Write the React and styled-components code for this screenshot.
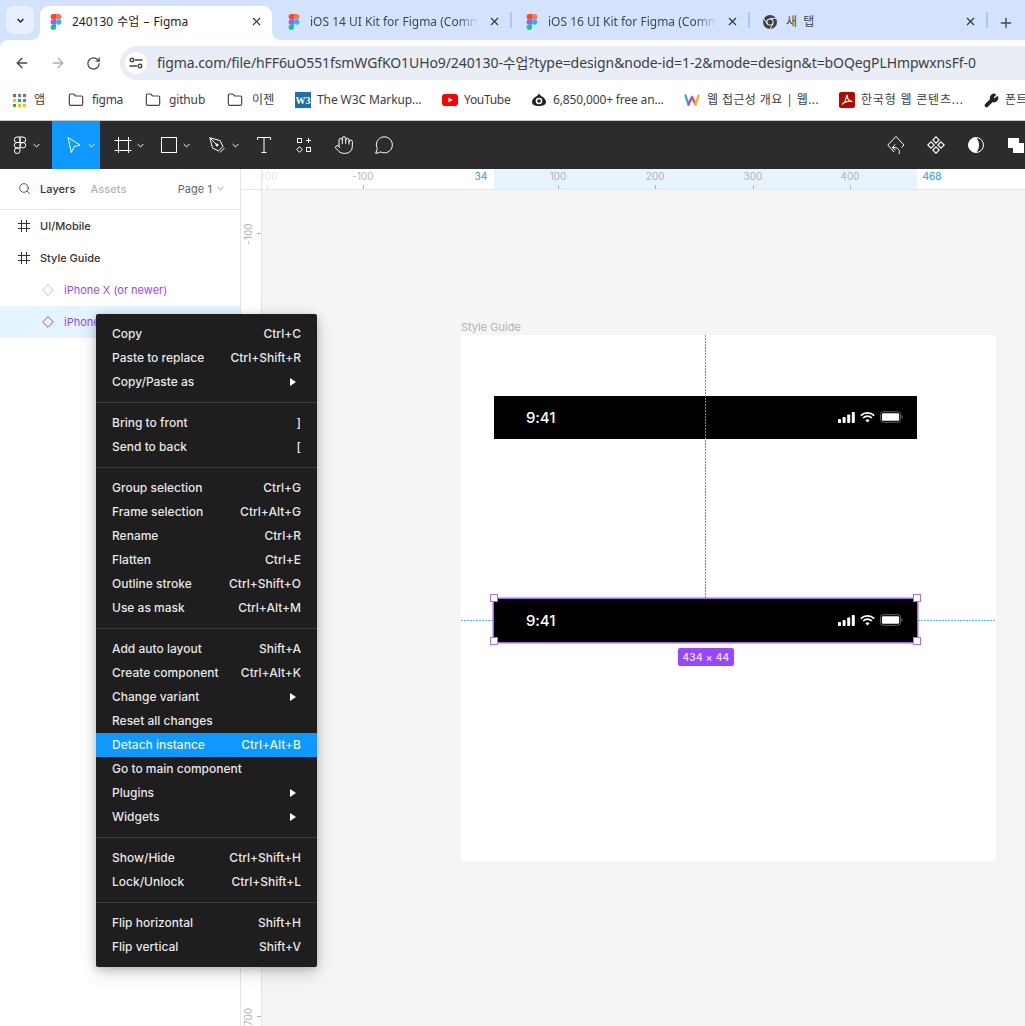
import React from 'react';
import styled, { createGlobalStyle } from 'styled-components';
import { ArrowLeft, ArrowRight, RotateCw, Plus, X, Folder, Wrench, Hand, Search } from 'lucide-react';

const GlobalStyle = createGlobalStyle`
  html, body { margin: 0; padding: 0; background: #f5f5f5; }
  * { box-sizing: border-box; }
  body { font-family: "Inter", "Noto Sans CJK KR", sans-serif; }
`;

const CHROME_FONT = '"Noto Sans", "Noto Sans CJK KR", sans-serif';

const Page = styled.div`
  position: relative;
  width: 1025px;
  height: 1026px;
  overflow: hidden;
  display: flex;
  flex-direction: column;
`;

/* browser chrome */
const BrowserHead = styled.div`
  background: #d3e3fd;
  flex-shrink: 0;
  font-family: ${CHROME_FONT};
`;

const TabStrip = styled.div`
  height: 40px;
  display: flex;
  align-items: flex-end;
`;

const TabSearch = styled.div`
  width: 28px;
  height: 28px;
  margin: 0 2px 6px 6px;
  border-radius: 8px;
  background: #e8f0fe;
  display: flex;
  align-items: center;
  justify-content: center;
  flex-shrink: 0;
`;

const Tab = styled.div`
  position: relative;
  width: 238px;
  height: 34px;
  flex-shrink: 0;
  display: flex;
  align-items: center;
  gap: 8px;
  padding: 0 10px 3px 12px;
  z-index: ${p => (p.$active ? 1 : 0)};

  &::before {
    content: '';
    position: absolute;
    top: 0;
    bottom: 0;
    left: 4px;
    right: 2px;
    border-radius: 9px 9px 0 0;
    background: ${p => (p.$active ? '#fff' : 'transparent')};
  }

  &::after {
    content: '';
    display: ${p => (p.$sep ? 'block' : 'none')};
    position: absolute;
    right: 0;
    top: 6px;
    width: 2px;
    height: 16px;
    background: #a8c7fa;
  }

  > * { position: relative; flex-shrink: 0; }
`;

const Curve = styled.span`
  position: absolute !important;
  bottom: 0;
  ${p => (p.$side === 'left' ? 'left: -4px;' : 'right: -6px;')}
  width: 8px;
  height: 8px;
  background: radial-gradient(circle at ${p => (p.$side === 'left' ? '0 0' : '100% 0')}, transparent 7.5px, #fff 8px);
`;

const TabTitle = styled.span`
  flex: 1 1 0;
  min-width: 0;
  font-size: 12px;
  line-height: 16px;
  word-spacing: ${p => p.$ws || 0}px;
  color: ${p => (p.$active ? '#1f1f1f' : '#444746')};
  white-space: nowrap;
  overflow: hidden;
  mask-image: ${p => (p.$fade ? 'linear-gradient(to right, #000 88%, transparent 100%)' : 'none')};
`;

const CloseBox = styled.span`
  width: 16px;
  height: 16px;
  display: flex;
  align-items: center;
  justify-content: center;
  color: #333;
`;

const NewTab = styled.div`
  margin: 0 0 9px 10px;
  color: #444746;
  display: flex;
`;

const Toolbar = styled.div`
  height: 40px;
  background: #fff;
  border-top-left-radius: 8px;
  display: flex;
  align-items: flex-end;
  padding-left: 14px;
`;

const NavGroup = styled.div`
  height: 34px;
  display: flex;
  align-items: center;
  gap: 20px;
  width: 106px;
  flex-shrink: 0;
`;

const NavIcon = styled.span`
  display: flex;
  color: ${p => (p.$dim ? '#b0b0b0' : '#444746')};
`;

const AddressBar = styled.div`
  flex: 1;
  height: 34px;
  background: #e9eef6;
  border-radius: 17px 0 0 17px;
  display: flex;
  align-items: center;
  padding-left: 5px;
  gap: 10px;
  overflow: hidden;
`;

const SiteBadge = styled.span`
  width: 22px;
  height: 22px;
  border-radius: 50%;
  background: #fff;
  display: flex;
  align-items: center;
  justify-content: center;
  flex-shrink: 0;
`;

const UrlText = styled.span`
  font-size: 14px;
  line-height: 20px;
  color: #3c4043;
  white-space: nowrap;
  letter-spacing: -0.09px;
`;

const Bookmarks = styled.div`
  height: 41px;
  background: #fff;
  border-bottom: 1px solid #c8c8c8;
  display: flex;
  align-items: center;
  padding-left: 13px;
  gap: 21px;
  white-space: nowrap;
  overflow: hidden;
`;

const Bookmark = styled.div`
  display: flex;
  align-items: center;
  gap: ${p => p.$gap || 6}px;
  flex-shrink: 0;
  width: ${p => p.$w}px;

  svg { flex-shrink: 0; }
`;

const BookmarkLabel = styled.span`
  font-size: 12px;
  line-height: 16px;
  letter-spacing: ${p => p.$ls}px;
  color: #3c4043;
`;

/* figma toolbar */
const FigmaBar = styled.div`
  height: 48px;
  background: #2c2c2c;
  display: flex;
  flex-shrink: 0;
  overflow: hidden;
`;

const ToolButton = styled.div`
  width: ${p => p.$w}px;
  flex-shrink: 0;
  display: flex;
  align-items: center;
  justify-content: ${p => (p.$chev ? 'flex-start' : 'center')};
  padding-left: ${p => p.$pad || 0}px;
  gap: ${p => p.$gap || 0}px;
  background: ${p => (p.$active ? '#0d99ff' : 'transparent')};
  color: #fff;
`;

const ToolSpacer = styled.div`
  flex: 1;
`;

const Workspace = styled.div`
  flex: 1;
  display: flex;
  min-height: 0;
`;

/* left panel */
const LeftPanel = styled.aside`
  width: 241px;
  flex-shrink: 0;
  background: #fff;
  border-right: 1px solid #e6e6e6;
`;

const PanelHead = styled.div`
  height: 41px;
  border-bottom: 1px solid #e6e6e6;
  display: flex;
  align-items: center;
  padding: 0 16px 1px 18px;
  font-size: 11px;
  letter-spacing: 0.06px;
`;

const PanelTab = styled.span`
  font-weight: 500;
  color: ${p => (p.$on ? '#333' : '#b3b3b3')};
  margin-left: ${p => p.$ml}px;
`;

const PageName = styled.span`
  margin-left: auto;
  display: flex;
  align-items: center;
  gap: 5px;
  color: #666;
  font-weight: 400;
`;

const LayerRow = styled.div`
  height: 32px;
  display: flex;
  align-items: center;
  padding-left: ${p => (p.$child ? 42 : 18)}px;
  gap: 10px;
  font-size: 11px;
  font-weight: ${p => (p.$child ? 400 : 500)};
  color: ${p => (p.$child ? '#9747ff' : '#333')};
  background: ${p => (p.$selected ? '#e5f4ff' : 'transparent')};
  white-space: nowrap;
`;

/* rulers + canvas */
const Stage = styled.div`
  flex: 1;
  display: grid;
  grid-template-columns: 21px 1fr;
  grid-template-rows: 21px 1fr;
  min-width: 0;
`;

const RulerCorner = styled.div`
  background: #fff;
  border-right: 1px solid #e6e6e6;
  border-bottom: 1px solid #e6e6e6;
`;

const HRuler = styled.div`
  position: relative;
  background: #fff;
  border-bottom: 1px solid #e6e6e6;
  overflow: hidden;
`;

const VRuler = styled.div`
  position: relative;
  background: #fff;
  border-right: 1px solid #e6e6e6;
  overflow: hidden;
`;

const RulerSpan = styled.div`
  position: absolute;
  left: 232px;
  width: 423px;
  top: 0;
  bottom: 0;
  background: #e5f4ff;
`;

const RulerLabel = styled.span`
  position: absolute;
  top: 0;
  left: ${p => p.$x}px;
  transform: translateX(-50%);
  font-size: 10px;
  line-height: 14px;
  color: ${p => (p.$blue ? '#3fa6f2' : '#b3b3b3')};
  font-weight: ${p => (p.$blue ? 500 : 400)};
  opacity: ${p => p.$fade || 1};
`;

const RulerTick = styled.span`
  position: absolute;
  bottom: 0;
  left: ${p => p.$x}px;
  width: 1px;
  height: 4px;
  background: #b3b3b3;
  opacity: ${p => p.$fade || 1};
`;

const VLabel = styled.span`
  position: absolute;
  left: 7px;
  top: ${p => p.$y}px;
  transform: translate(-50%, -50%) rotate(-90deg);
  font-size: 10px;
  line-height: 14px;
  color: #b3b3b3;
`;

const VTick = styled.span`
  position: absolute;
  right: 0;
  top: ${p => p.$y}px;
  width: 4px;
  height: 1px;
  background: #b3b3b3;
`;

const Canvas = styled.div`
  position: relative;
  background: #f5f5f5;
  overflow: hidden;
`;

const FrameLabel = styled.span`
  position: absolute;
  left: 199px;
  top: 130px;
  font-size: 11px;
  line-height: 14px;
  color: #b3b3b3;
`;

const Frame = styled.div`
  position: absolute;
  left: 199px;
  top: 145px;
  width: 535px;
  height: 526px;
  background: #fff;
`;

const StatusBar = styled.div`
  position: absolute;
  left: 33px;
  top: ${p => p.$top}px;
  width: 423px;
  height: 42.5px;
  background: #000;
  display: flex;
  align-items: center;
  padding: 0 14px 0 32px;
  color: #fff;
  ${p => p.$selected && 'box-shadow: 0 0 0 1.5px #a066ff;'}
`;

const Clock = styled.span`
  font-size: 15px;
  font-weight: 500;
  letter-spacing: -0.1px;
`;

const StatusIcons = styled.div`
  margin-left: auto;
  display: flex;
  align-items: center;
  gap: 5px;
`;

const Guide = styled.div`
  position: absolute;
  left: ${p => p.$x}px;
  top: ${p => p.$y}px;
  ${p => (p.$vertical
    ? `width: 1px; height: ${p.$len}px; background: repeating-linear-gradient(to bottom, #2f9df0 0 2px, transparent 2px 3px);`
    : `height: 1px; width: ${p.$len}px; background: repeating-linear-gradient(to right, #55b8ff 0 2px, transparent 2px 3px);`)}
`;

const Handle = styled.span`
  position: absolute;
  left: ${p => p.$x}px;
  top: ${p => p.$y}px;
  width: 8px;
  height: 8px;
  background: #fff;
  border: 1.5px solid #a970ff;
`;

const SizeTag = styled.span`
  position: absolute;
  left: 416px;
  top: 458px;
  width: 56px;
  height: 18px;
  border-radius: 2px;
  background: #9747ff;
  color: #ecdcff;
  font-size: 10px;
  font-weight: 600;
  letter-spacing: 0.3px;
  display: flex;
  align-items: center;
  justify-content: center;
`;

/* context menu */
const Menu = styled.div`
  position: absolute;
  left: 96px;
  top: 314px;
  width: 221px;
  padding: 8px 0;
  background: #1e1e1e;
  border-radius: 2px;
  box-shadow: 0 5px 17px rgba(0, 0, 0, 0.2), 0 2px 7px rgba(0, 0, 0, 0.15);
  color: #fff;
  font-size: 12px;
`;

const MenuRow = styled.div`
  height: 24px;
  display: flex;
  align-items: center;
  justify-content: space-between;
  padding: 0 16px 2px;
  font-weight: 500;
  color: rgba(255, 255, 255, 0.92);
  background: ${p => (p.$hover ? '#0d99ff' : 'transparent')};
`;

const MenuDivider = styled.div`
  height: 1px;
  margin: 8px 0;
  background: #3a3a3a;
`;

const MenuArrow = styled.svg`
  width: 6px;
  height: 8px;
  margin: 2px 5px 0 0;
`;

const menuGroups = [
  [['Copy', 'Ctrl+C'], ['Paste to replace', 'Ctrl+Shift+R'], ['Copy/Paste as', '>']],
  [['Bring to front', ']'], ['Send to back', '[']],
  [['Group selection', 'Ctrl+G'], ['Frame selection', 'Ctrl+Alt+G'], ['Rename', 'Ctrl+R'], ['Flatten', 'Ctrl+E'], ['Outline stroke', 'Ctrl+Shift+O'], ['Use as mask', 'Ctrl+Alt+M']],
  [['Add auto layout', 'Shift+A'], ['Create component', 'Ctrl+Alt+K'], ['Change variant', '>'], ['Reset all changes', ''], ['Detach instance', 'Ctrl+Alt+B'], ['Go to main component', ''], ['Plugins', '>'], ['Widgets', '>']],
  [['Show/Hide', 'Ctrl+Shift+H'], ['Lock/Unlock', 'Ctrl+Shift+L']],
  [['Flip horizontal', 'Shift+H'], ['Flip vertical', 'Shift+V']],
];

const FigmaColor = ({ size = 16 }) => (
  <svg width={size} height={size} viewBox="0 0 16 16">
    <path fill="#f24e1e" d="M8 0H5.3a2.7 2.7 0 0 0 0 5.4H8z" />
    <path fill="#ff7262" d="M8 0h2.7a2.7 2.7 0 0 1 0 5.4H8z" />
    <path fill="#a259ff" d="M8 5.3H5.3a2.7 2.7 0 0 0 0 5.4H8z" />
    <circle fill="#1abcfe" cx="10.7" cy="8" r="2.7" />
    <path fill="#0acf83" d="M5.3 10.6H8v2.7a2.7 2.7 0 1 1-2.7-2.7z" />
  </svg>
);

const ChromeIcon = () => (
  <svg width="16" height="16" viewBox="0 0 16 16">
    <circle cx="8" cy="8" r="7" fill="#3c3f43" />
    <circle cx="8" cy="8" r="3.6" fill="#fff" />
    <circle cx="8" cy="8" r="2.6" fill="#3c3f43" />
    <path d="M8 4.4h6.2M5 9.8 1.9 4.5M11.1 9.8 8 15" stroke="#fff" strokeWidth="0.9" />
  </svg>
);

const Chevron = ({ color = '#fff', w = 7, sw = 1 }) => (
  <svg width={w} height="5" viewBox="0 0 7 5" fill="none">
    <path d="M.6 1 3.5 3.9 6.4 1" stroke={color} strokeWidth={sw} />
  </svg>
);

const AppsIcon = () => (
  <svg width="13" height="13" viewBox="0 0 13 13">
    {[['#ea4335', '#4285f4', '#ea4335'], ['#fbbc04', '#34a853', '#4285f4'], ['#34a853', '#fbbc04', '#fbbc04']].map((row, r) =>
      row.map((c, i) => <rect key={`${r}${i}`} x={i * 5} y={r * 5} width="3" height="3" fill={c} />)
    )}
  </svg>
);

const TuneIcon = () => (
  <svg width="14" height="12" viewBox="0 0 14 12" fill="none" stroke="#444746" strokeWidth="1.4">
    <circle cx="3" cy="3" r="1.8" />
    <path d="M6 3h7.5M.5 9H8" />
    <circle cx="11" cy="9" r="1.8" />
  </svg>
);

const W3Icon = () => (
  <svg width="16" height="16" viewBox="0 0 16 16">
    <rect width="16" height="16" fill="#1d6fa8" />
    <text x="8" y="12" textAnchor="middle" fontSize="10" fontWeight="700" fill="#fff" fontFamily="Liberation Serif, serif">W3</text>
  </svg>
);

const YouTubeIcon = () => (
  <svg width="16" height="12" viewBox="0 0 16 12">
    <rect width="16" height="12" rx="3" fill="#ff0000" />
    <path d="M6.4 3.4v5.2L10.8 6z" fill="#fff" />
  </svg>
);

const EyeIcon = () => (
  <svg width="16" height="16" viewBox="0 0 16 16">
    <path d="M8 1.5c.9 1.6 2 2.4 3.4 3.3C13.3 6 15 8 15 10c0 2.6-3 4-7 4s-7-1.4-7-4c0-2 1.7-4 3.6-5.2C6 3.9 7.1 3.1 8 1.5z" fill="#222" />
    <circle cx="8" cy="9" r="3.3" fill="#fff" />
    <circle cx="8" cy="9" r="1.8" fill="#222" />
  </svg>
);

const WavyIcon = () => (
  <svg width="16" height="14" viewBox="0 0 16 14" fill="none" strokeWidth="2.4" strokeLinecap="round">
    <path d="M1.5 2.5 4.5 11.5" stroke="#38b2c9" />
    <path d="M4.5 11.5 8 4" stroke="#8b5fbf" />
    <path d="M8 4 11.5 11.5" stroke="#e0527a" />
    <path d="M11.5 11.5 14.5 2.5" stroke="#f2b632" />
  </svg>
);

const PdfIcon = () => (
  <svg width="16" height="16" viewBox="0 0 16 16">
    <rect width="16" height="16" rx="2" fill="#b30b00" />
    <path d="M3 12.5c2.5-1.5 4-4.5 4.5-8.5.2-1.2 1.1-1 1 .3-.3 3 2 5 5 5.2M3.5 11.5c3-1.7 6-2.500 9.500-2.300" stroke="#fff" strokeWidth="1.1" fill="none" />
  </svg>
);

const FigmaOutline = () => (
  <svg width="14" height="18" viewBox="0 0 14 18" fill="none" stroke="#fff" strokeWidth="1">
    <path d="M7 1H4a2.7 2.7 0 0 0 0 5.5h3zM7 1h3a2.7 2.7 0 0 1 0 5.5H7zM7 6.5H4a2.7 2.7 0 0 0 0 5.5h3z" />
    <circle cx="10" cy="9.25" r="2.75" />
    <path d="M4 12h3v2.8A2.800 2.800 0 1 1 4 12z" />
  </svg>
);

const MoveIcon = () => (
  <svg width="14" height="18" viewBox="0 0 14 18" fill="none" stroke="#fff" strokeWidth="1">
    <path d="M1 1.5 13 9 7.2 10.6 4.3 16.5z" />
  </svg>
);

const FrameIcon = () => (
  <svg width="18" height="18" viewBox="0 0 18 18" fill="none" stroke="#fff" strokeWidth="1">
    <path d="M4.5 1v16M14.5 1v16M.5 4.5h17M.5 14.5h17" />
  </svg>
);

const RectIcon = () => (
  <svg width="16" height="16" viewBox="0 0 16 16" fill="none" stroke="#fff" strokeWidth="1">
    <rect x=".5" y=".5" width="15" height="15" />
  </svg>
);

const PenIcon = () => (
  <svg width="17" height="17" viewBox="0 0 17 17" fill="none" stroke="#fff" strokeWidth="1">
    <path d="M.8.8 11 3.5l3 6-4.5 4.5-6-3zM.8.8 7.2 7.2M11 15.5 15.5 11" />
    <circle cx="8" cy="8" r="1.1" fill="#fff" />
  </svg>
);

const TextIcon = () => (
  <svg width="14" height="16" viewBox="0 0 14 16" fill="none" stroke="#fff" strokeWidth="1">
    <path d="M.5 3V.5h13V3M7 .5v15M4.5 15.5h5" />
  </svg>
);

const ComponentsIcon = () => (
  <svg width="16" height="16" viewBox="0 0 16 16" fill="none" stroke="#fff" strokeWidth="1">
    <rect x="1.5" y="1.5" width="4" height="4" />
    <path d="M12.5 1v5M10 3.5h5" />
    <path d="M3.5 9.7 6.3 12.5 3.5 15.3.7 12.5z" />
    <rect x="10.5" y="10.5" width="4" height="4" />
  </svg>
);

const CommentIcon = () => (
  <svg width="18" height="18" viewBox="0 0 18 18" fill="none" stroke="#fff" strokeWidth="1">
    <path d="M.7 17.3 2.3 12.6A8 8 0 1 1 5.6 15.9C4 16.7 2.2 17.3.7 17.3z" />
  </svg>
);

const ResetIcon = () => (
  <svg width="18" height="20" viewBox="0 0 18 20" fill="none" stroke="#fff" strokeWidth="1">
    <path d="M7 17 .8 10 9 1.5l8 8.5-2.5 2.6" />
    <path d="M12 19c1.3-3-.2-7-6.500-6.500M8.200 9.500 5.400 12.500l3 2.800" />
  </svg>
);

const DotsIcon = () => (
  <svg width="18" height="18" viewBox="0 0 18 18" fill="none" stroke="#fff" strokeWidth="1.1">
    <path d="M9 .8 12.2 4 9 7.2 5.8 4zM9 10.8 12.2 14 9 17.2 5.8 14zM4 5.8 7.2 9 4 12.2.8 9zM14 5.8 17.2 9 14 12.2 10.8 9z" />
  </svg>
);

const ContrastIcon = () => (
  <svg width="16" height="16" viewBox="0 0 16 16">
    <circle cx="8" cy="8" r="7.5" fill="none" stroke="#fff" />
    <path d="M8 .5a7.5 7.5 0 0 0 0 15c2-2 3-4.500 3-7.500S10 2.500 8 .5z" fill="#fff" />
  </svg>
);

const OverlapIcon = () => (
  <svg width="16" height="16" viewBox="0 0 16 16" fill="#fff">
    <rect x="0" y="1" width="11" height="10" />
    <rect x="5" y="6" width="11" height="11" />
  </svg>
);

const HashGlyph = () => (
  <svg width="12" height="12" viewBox="0 0 12 12" fill="none" stroke="#333" strokeWidth="1">
    <path d="M3.5 0v12M8.5 0v12M0 3.5h12M0 8.5h12" />
  </svg>
);

const DiamondGlyph = ({ faded }) => (
  <svg width="12" height="12" viewBox="0 0 12 12" fill="none" stroke="#9747ff" strokeWidth="1" opacity={faded ? 0.4 : 1}>
    <path d="M6 .7 11.3 6 6 11.3.7 6z" />
  </svg>
);

const SignalIcon = () => (
  <svg width="17" height="11" viewBox="0 0 17 11" fill="#fff">
    <rect x="0" y="7" width="3" height="4" rx=".8" />
    <rect x="4.6" y="5" width="3" height="6" rx=".8" />
    <rect x="9.2" y="2.5" width="3" height="8.5" rx=".8" />
    <rect x="13.8" y="0" width="3" height="11" rx=".8" />
  </svg>
);

const WifiIcon = () => (
  <svg width="15" height="11" viewBox="0 0 15 11" fill="none" stroke="#fff" strokeWidth="1.7">
    <path d="M.8 3.6a9.6 9.6 0 0 1 13.4 0M3.1 6a6.3 6.3 0 0 1 8.8 0" />
    <path d="M5.4 8.2a3 3 0 0 1 4.2 0L7.5 10.5z" fill="#fff" stroke="none" />
  </svg>
);

const BatteryIcon = () => (
  <svg width="23" height="12" viewBox="0 0 24 12">
    <rect x=".5" y=".5" width="21" height="11" rx="3" fill="none" stroke="#666" />
    <rect x="2" y="2" width="18" height="8" rx="1.5" fill="#fff" />
    <path d="M22.5 4v4c.8-.3 1.3-1.100 1.300-2s-.5-1.700-1.300-2z" fill="#666" />
  </svg>
);

const StatusContent = () => (
  <>
    <Clock>9:41</Clock>
    <StatusIcons>
      <SignalIcon />
      <WifiIcon />
      <BatteryIcon />
    </StatusIcons>
  </>
);

const tabs = [
  { title: '240130 수업 – Figma', active: true, ws: 1 },
  { title: 'iOS 14 UI Kit for Figma (Comm', fade: true, sep: true },
  { title: 'iOS 16 UI Kit for Figma (Comm', fade: true, sep: true },
  { title: '새 탭', chrome: true, sep: true, ws: 3 },
];

const bookmarks = [
  { icon: <AppsIcon />, label: '앱', w: 34, gap: 8, ls: 0.3 },
  { icon: <Folder size={16} color="#444746" strokeWidth={1.8} />, label: 'figma', w: 56, gap: 8, ls: -0.3 },
  { icon: <Folder size={16} color="#444746" strokeWidth={1.8} />, label: 'github', w: 61, gap: 8, ls: -0.15 },
  { icon: <Folder size={16} color="#444746" strokeWidth={1.8} />, label: '이젠', w: 47, gap: 9, ls: 0.3 },
  { icon: <W3Icon />, label: 'The W3C Markup...', w: 126, ls: -0.1 },
  { icon: <YouTubeIcon />, label: 'YouTube', w: 68, ls: -0.3 },
  { icon: <EyeIcon />, label: '6,850,000+ free an...', w: 132, ls: -0.15 },
  { icon: <WavyIcon />, label: '웹 접근성 개요 | 웹...', w: 134, gap: 7, ls: 0.4 },
  { icon: <PdfIcon />, label: '한국형 웹 콘텐츠...', w: 124, ls: 0.8 },
  { icon: <Wrench size={15} color="#222" fill="#222" />, label: '폰트', w: 60, ls: 0.3 },
];

export default function App() {
  return (
    <Page>
      <GlobalStyle />
      <BrowserHead>
        <TabStrip>
          <TabSearch>
            <Chevron color="#1f1f1f" w={9} sw={1.4} />
          </TabSearch>
          {tabs.map(t => (
            <Tab key={t.title} $active={t.active} $sep={t.sep}>
              {t.active && <Curve $side="left" />}
              {t.active && <Curve $side="right" />}
              {t.chrome ? <ChromeIcon /> : <FigmaColor />}
              <TabTitle $active={t.active} $fade={t.fade} $ws={t.ws}>{t.title}</TabTitle>
              <CloseBox><X size={13} strokeWidth={2} /></CloseBox>
            </Tab>
          ))}
          <NewTab><Plus size={16} strokeWidth={2} /></NewTab>
        </TabStrip>
        <Toolbar>
          <NavGroup>
            <NavIcon><ArrowLeft size={16} strokeWidth={2} /></NavIcon>
            <NavIcon $dim><ArrowRight size={16} strokeWidth={2} /></NavIcon>
            <NavIcon><RotateCw size={15} strokeWidth={2} /></NavIcon>
          </NavGroup>
          <AddressBar>
            <SiteBadge><TuneIcon /></SiteBadge>
            <UrlText>figma.com/file/hFF6uO551fsmWGfKO1UHo9/240130-수업?type=design&amp;node-id=1-2&amp;mode=design&amp;t=bOQegPLHmpwxnsFf-0</UrlText>
          </AddressBar>
        </Toolbar>
        <Bookmarks>
          {bookmarks.map(b => (
            <Bookmark key={b.label} $w={b.w} $gap={b.gap}>
              {b.icon}
              <BookmarkLabel $ls={b.ls}>{b.label}</BookmarkLabel>
            </Bookmark>
          ))}
        </Bookmarks>
      </BrowserHead>

      <FigmaBar>
        <ToolButton $w={52} $chev $pad={13} $gap={6}><FigmaOutline /><Chevron /></ToolButton>
        <ToolButton $w={48} $active $chev $pad={15} $gap={7}><MoveIcon /><Chevron /></ToolButton>
        <ToolButton $w={48} $chev $pad={14} $gap={5}><FrameIcon /><Chevron /></ToolButton>
        <ToolButton $w={48} $chev $pad={13} $gap={6}><RectIcon /><Chevron /></ToolButton>
        <ToolButton $w={48} $chev $pad={13} $gap={6}><PenIcon /><Chevron /></ToolButton>
        <ToolButton $w={40}><TextIcon /></ToolButton>
        <ToolButton $w={40}><ComponentsIcon /></ToolButton>
        <ToolButton $w={40}><Hand size={20} strokeWidth={1.2} /></ToolButton>
        <ToolButton $w={40}><CommentIcon /></ToolButton>
        <ToolSpacer />
        <ToolButton $w={40}><ResetIcon /></ToolButton>
        <ToolButton $w={40}><DotsIcon /></ToolButton>
        <ToolButton $w={40}><ContrastIcon /></ToolButton>
        <ToolButton $w={29} $chev $pad={12}><OverlapIcon /></ToolButton>
      </FigmaBar>

      <Workspace>
        <LeftPanel>
          <PanelHead>
            <Search size={13} color="#333" strokeWidth={1.5} />
            <PanelTab $on $ml={9}>Layers</PanelTab>
            <PanelTab $ml={15}>Assets</PanelTab>
            <PageName>Page 1 <Chevron color="#999" /></PageName>
          </PanelHead>
          <LayerRow><HashGlyph />UI/Mobile</LayerRow>
          <LayerRow><HashGlyph />Style Guide</LayerRow>
          <LayerRow $child><DiamondGlyph faded />iPhone X (or newer)</LayerRow>
          <LayerRow $child $selected><DiamondGlyph />iPhone 8</LayerRow>
        </LeftPanel>

        <Stage>
          <RulerCorner />
          <HRuler>
            <RulerSpan />
            <RulerLabel $x={4} $fade={0.35}>-200</RulerLabel>
            <RulerTick $x={5} $fade={0.35} />
            <RulerLabel $x={101}>-100</RulerLabel>
            <RulerTick $x={101} />
            <RulerLabel $x={219} $blue>34</RulerLabel>
            <RulerLabel $x={296}>100</RulerLabel>
            <RulerTick $x={296} />
            <RulerLabel $x={393}>200</RulerLabel>
            <RulerTick $x={393} />
            <RulerLabel $x={491}>300</RulerLabel>
            <RulerTick $x={491} />
            <RulerLabel $x={588}>400</RulerLabel>
            <RulerTick $x={588} />
            <RulerLabel $x={670} $blue>468</RulerLabel>
          </HRuler>
          <VRuler>
            <VLabel $y={44}>-100</VLabel>
            <VTick $y={43} />
            <VLabel $y={827}>700</VLabel>
            <VTick $y={826} />
          </VRuler>
          <Canvas>
            <FrameLabel>Style Guide</FrameLabel>
            <Frame>
              <StatusBar $top={61}><StatusContent /></StatusBar>
              <StatusBar $top={264} $selected><StatusContent /></StatusBar>
            </Frame>
            <Guide $vertical $x={443} $y={145} $len={263} />
            <Guide $x={199} $y={430} $len={32} />
            <Guide $x={656} $y={430} $len={78} />
            <Handle $x={228} $y={404} />
            <Handle $x={651} $y={404} />
            <Handle $x={228} $y={447} />
            <Handle $x={651} $y={447} />
            <SizeTag>434 × 44</SizeTag>
          </Canvas>
        </Stage>
      </Workspace>

      <Menu>
        {menuGroups.map((group, i) => (
          <React.Fragment key={group[0][0]}>
            {i > 0 && <MenuDivider />}
            {group.map(([label, hint]) => (
              <MenuRow key={label} $hover={label === 'Detach instance'}>
                <span>{label}</span>
                {hint === '>' ? (
                  <MenuArrow viewBox="0 0 6 8"><path d="M0 0l6 4-6 4z" fill="#fff" /></MenuArrow>
                ) : (
                  <span>{hint}</span>
                )}
              </MenuRow>
            ))}
          </React.Fragment>
        ))}
      </Menu>
    </Page>
  );
}
